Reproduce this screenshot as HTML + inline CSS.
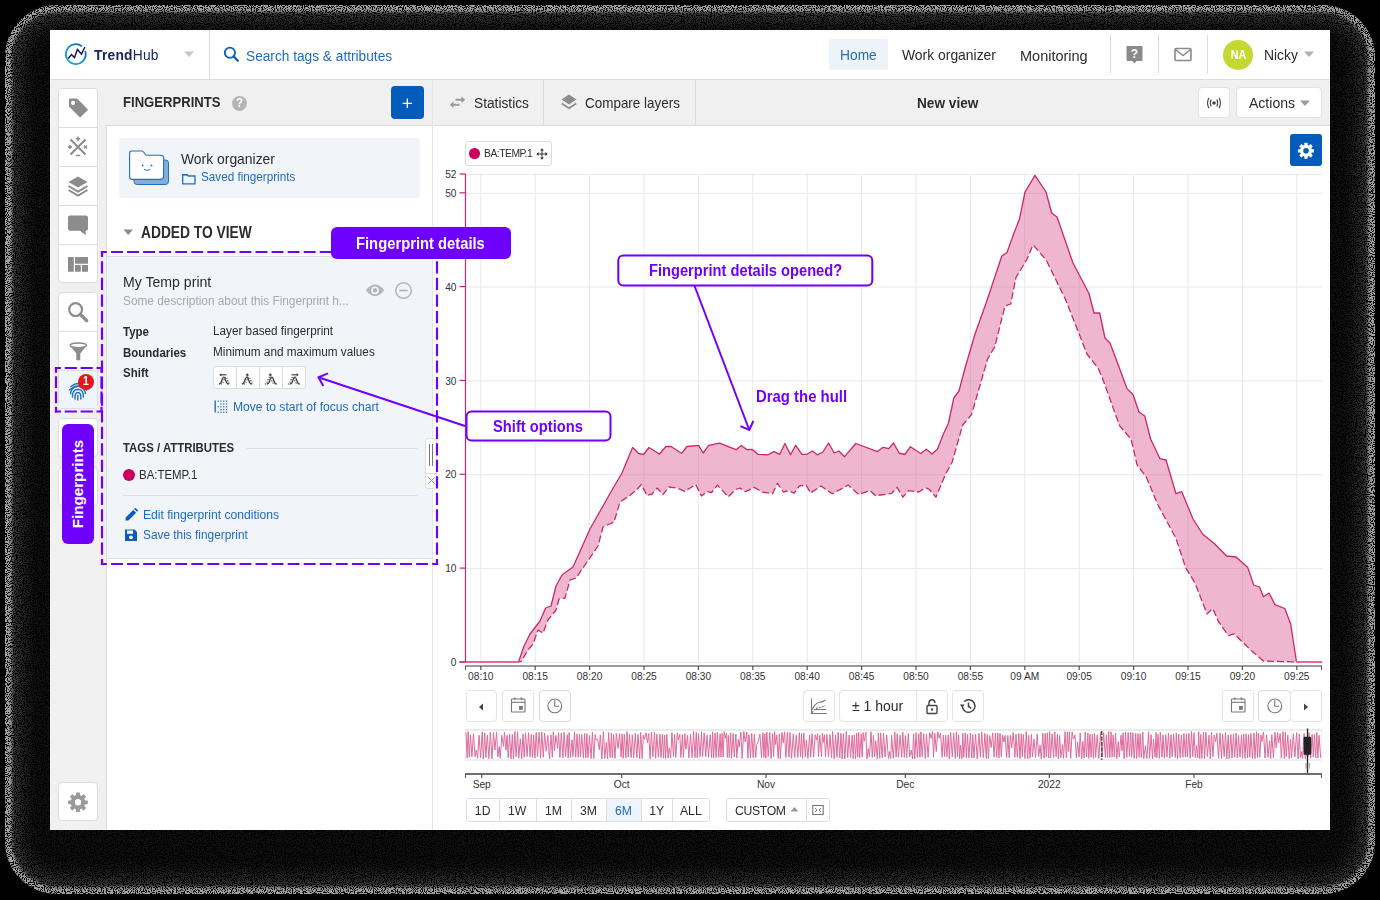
<!DOCTYPE html>
<html><head><meta charset="utf-8"><style>
*{box-sizing:border-box;margin:0;padding:0}
html,body{width:1380px;height:900px;overflow:hidden;background:#000}
body{font-family:"Liberation Sans",sans-serif;position:relative}
.abs{position:absolute}
svg{overflow:visible}
.t{position:absolute;white-space:nowrap;line-height:1;font-family:"Liberation Sans",sans-serif}
</style></head>
<body>
<div class="abs" style="left:5px;top:5px;width:1370px;height:889px;border-radius:52px;background:rgba(255,255,255,.06);box-shadow:inset 0 0 3px 7px rgba(255,255,255,.50), inset 0 0 26px 9px rgba(255,255,255,.30)"></div>
<svg class="abs" style="left:0;top:0" width="1380" height="900"><defs><filter id="spk" x="0" y="0" width="1380" height="900" filterUnits="userSpaceOnUse" color-interpolation-filters="sRGB"><feTurbulence type="fractalNoise" baseFrequency="0.9" numOctaves="1" seed="11"/><feColorMatrix type="matrix" values="0 0 0 0 0  0 0 0 0 0  0 0 0 0 0  14 0 0 0 -7"/></filter></defs><rect x="0" y="0" width="1380" height="900" fill="#000" filter="url(#spk)"/></svg>
<div class="abs" style="left:50px;top:30px;width:1280px;height:800px;background:#fff"></div>
<div class="abs" style="left:50px;top:79px;width:1280px;height:1px;background:#dddddd"></div>
<svg class="abs" style="left:64px;top:42px" width="24" height="24" viewBox="0 0 24 24"><defs><linearGradient id="lg" x1="0" y1="1" x2="1" y2="0"><stop offset="0" stop-color="#22b0e6"/><stop offset="1" stop-color="#0d5fbf"/></linearGradient></defs><path d="M21.27 9.09 A9.9 9.9 0 1 1 17.96 4.35" fill="none" stroke="url(#lg)" stroke-width="1.8"/><path d="M4.2 16.5 L7.5 12.6 L10.5 15.6 L13.4 7.5 L17.5 12.1 L20.9 5" fill="none" stroke="#1b1c5c" stroke-width="1.5" stroke-linejoin="miter"/></svg>
<div class="t" style="left:94.4px;top:48.31px;font-size:14.70px;font-weight:400;color:#1b2463;transform:scaleX(0.9390);transform-origin:0 0;letter-spacing:0.25px"><b>Trend</b>Hub</div>
<svg class="abs" style="left:184px;top:51px" width="11" height="7" viewBox="0 0 11 7"><path d="M0 0.5 L10 0.5 L5 6 Z" fill="#c8c8c8"/></svg>
<div class="abs" style="left:209px;top:30px;width:1px;height:49px;background:#dddddd"></div>
<svg class="abs" style="left:223px;top:46px" width="18" height="17" viewBox="0 0 18 17"><circle cx="6.9" cy="6.7" r="5.1" fill="none" stroke="#0f5fbf" stroke-width="1.9"/><path d="M10.6 10.4 L14.9 14.8" stroke="#0f5fbf" stroke-width="2.3" stroke-linecap="round"/></svg>
<div class="t" style="left:246.3px;top:48.90px;font-size:14.59px;font-weight:400;color:#1e6bc5;transform:scaleX(0.9390);transform-origin:0 0;">Search tags &amp; attributes</div>
<div class="abs" style="left:829px;top:39px;width:59px;height:31px;background:#eef3fa;border-radius:2px"></div>
<div class="t" style="left:840.3px;top:47.51px;font-size:14.70px;font-weight:400;color:#1e6bc5;transform:scaleX(0.9390);transform-origin:0 0;">Home</div>
<div class="t" style="left:901.7px;top:48.42px;font-size:14.80px;font-weight:400;color:#2b2b2b;transform:scaleX(0.9390);transform-origin:0 0;">Work organizer</div>
<div class="t" style="left:1019.9px;top:47.87px;font-size:15.44px;font-weight:400;color:#2b2b2b;transform:scaleX(0.9390);transform-origin:0 0;">Monitoring</div>
<div class="abs" style="left:1110px;top:35px;width:1px;height:39px;background:#dddddd"></div>
<div class="abs" style="left:1158px;top:35px;width:1px;height:39px;background:#dddddd"></div>
<div class="abs" style="left:1207px;top:35px;width:1px;height:39px;background:#dddddd"></div>
<svg class="abs" style="left:1126px;top:45px" width="18" height="20" viewBox="0 0 18 20"><path d="M1.5 1 H15.5 A1 1 0 0 1 16.5 2 V15 A1 1 0 0 1 15.5 16 H10.5 L8.5 18.5 L6.5 16 H1.5 A1 1 0 0 1 0.5 15 V2 A1 1 0 0 1 1.5 1 Z" fill="#8a8a8a"/><text x="8.5" y="13.2" font-family="Liberation Sans" font-weight="700" font-size="12" fill="#fff" text-anchor="middle">?</text></svg>
<svg class="abs" style="left:1174px;top:47px" width="18" height="15" viewBox="0 0 18 15"><rect x="1" y="1.5" width="16" height="12" rx="1" fill="none" stroke="#8a8a8a" stroke-width="1.6"/><path d="M1.5 2.5 L9 8.5 L16.5 2.5" fill="none" stroke="#8a8a8a" stroke-width="1.6"/></svg>
<div class="abs" style="left:1223px;top:39.5px;width:30px;height:30px;border-radius:50%;background:#c4d733"></div>
<div class="t" style="left:1226.5px;top:48.53px;font-size:12.20px;font-weight:700;color:#fff;transform:scaleX(0.8850);transform-origin:50% 0;width:23px;text-align:center">NA</div>
<div class="t" style="left:1263.6px;top:48.42px;font-size:14.80px;font-weight:400;color:#2b2b2b;transform:scaleX(0.9390);transform-origin:0 0;">Nicky</div>
<svg class="abs" style="left:1304px;top:51px" width="11" height="7" viewBox="0 0 11 7"><path d="M0 0.5 L10 0.5 L5 6 Z" fill="#b0b0b0"/></svg>
<div class="abs" style="left:50px;top:80px;width:382px;height:45px;background:#f0f0f0"></div>
<div class="abs" style="left:50px;top:125px;width:57px;height:705px;background:#f0f0f0"></div>
<div class="abs" style="left:106px;top:125px;width:1px;height:705px;background:#dddddd"></div>
<div class="abs" style="left:58px;top:88px;width:40px;height:195px;background:#fff;border:1px solid #dddddd;border-radius:4px"></div><div class="abs" style="left:58px;top:127px;width:40px;height:1px;background:#dddddd"></div><div class="abs" style="left:58px;top:166px;width:40px;height:1px;background:#dddddd"></div><div class="abs" style="left:58px;top:205px;width:40px;height:1px;background:#dddddd"></div><div class="abs" style="left:58px;top:244px;width:40px;height:1px;background:#dddddd"></div>
<div class="abs" style="left:58px;top:292px;width:40px;height:117px;background:#fff;border:1px solid #dddddd;border-radius:4px"></div><div class="abs" style="left:59px;top:371px;width:38px;height:37px;background:#eef5fb"></div><div class="abs" style="left:58px;top:331px;width:40px;height:1px;background:#dddddd"></div><div class="abs" style="left:58px;top:370px;width:40px;height:1px;background:#dddddd"></div>
<div class="abs" style="left:58px;top:418px;width:40px;height:39px;background:#fff;border:1px solid #dddddd;border-radius:4px"></div>
<div class="abs" style="left:58px;top:467px;width:40px;height:39px;background:#fff;border:1px solid #dddddd;border-radius:4px"></div>
<div class="abs" style="left:58px;top:782px;width:40px;height:39px;background:#fff;border:1px solid #dddddd;border-radius:4px"></div>
<svg class="abs" style="left:67px;top:97px" width="22" height="22" viewBox="0 0 22 22"><path d="M2 2.5 Q2 1.5 3 1.5 L10 1.5 L20.5 12 Q21 12.6 20.5 13.2 L13.7 20 Q13.1 20.5 12.5 20 L2 9.5 Z" fill="#8c8c8c"/><circle cx="6.1" cy="5.9" r="2.1" fill="#fff"/></svg>
<svg class="abs" style="left:67px;top:136px" width="22" height="22" viewBox="0 0 22 22"><path d="M3.5 3.5 L18.5 18.5 M18.5 3.5 L3.5 18.5" stroke="#8c8c8c" stroke-width="2"/><path d="M11 0.5 V5 M8.8 2.8 H13.2 M0.8 11 H5 M2.9 8.9 V13.1 M17 9.5 L20 12.5 M20 9.5 L17 12.5 M8.8 19.6 H13.2" stroke="#8c8c8c" stroke-width="1.5"/></svg>
<svg class="abs" style="left:67px;top:175px" width="22" height="22" viewBox="0 0 22 22"><path d="M11 1.5 L20.5 7 L11 12.5 L1.5 7 Z" fill="#8c8c8c"/><path d="M1.5 11 L11 16.5 L20.5 11 M1.5 15 L11 20.5 L20.5 15" fill="none" stroke="#8c8c8c" stroke-width="2"/></svg>
<svg class="abs" style="left:67px;top:214px" width="22" height="22" viewBox="0 0 22 22"><path d="M3 1.5 H19 Q21 1.5 21 3.5 V14.8 Q21 16.8 19 16.8 H18.6 L18.7 21.2 L13 16.8 H3 Q1 16.8 1 14.8 V3.5 Q1 1.5 3 1.5 Z" fill="#8c8c8c"/></svg>
<svg class="abs" style="left:67px;top:253px" width="22" height="22" viewBox="0 0 22 22"><path d="M1 4 H6.8 V18.8 H1 Z M8 4 H21 V10.7 H8 Z M8 12 H13.8 V18.8 H8 Z M15 12 H21 V18.8 H15 Z" fill="#8c8c8c"/></svg>
<svg class="abs" style="left:67px;top:301px" width="22" height="22" viewBox="0 0 22 22"><circle cx="8.6" cy="8.6" r="6.4" fill="none" stroke="#8c8c8c" stroke-width="2.2"/><path d="M13.3 13.3 L19.6 19.6" stroke="#8c8c8c" stroke-width="3.4" stroke-linecap="round"/></svg>
<svg class="abs" style="left:67px;top:340px" width="22" height="22" viewBox="0 0 22 22"><ellipse cx="11.3" cy="5.3" rx="8.1" ry="2.4" fill="none" stroke="#8c8c8c" stroke-width="1.5"/><path d="M3.2 5.8 L9.3 13.5 V20.3 H13.3 V13.5 L19.4 5.8 Q16 8.4 11.3 8.2 Q6.6 8.4 3.2 5.8 Z" fill="#8c8c8c"/></svg>
<svg class="abs" style="left:67px;top:379px" width="22" height="22" viewBox="0 0 22 22"><g fill="none" stroke="#1f6fc2" stroke-width="1.4" stroke-linecap="round"><path d="M4 7.5 Q11 1.5 18 7.5"/><path d="M2.5 11 Q11 3.5 19.5 11"/><path d="M3.5 14.5 Q5 7 11 7 Q17 7 18.5 14.5"/><path d="M5.5 18 Q5 10.5 11 10.3 Q16.8 10.5 16.3 18"/><path d="M8 20 Q7.5 13.5 11 13.5 Q14.3 13.5 13.8 20"/><path d="M10.8 16.5 L10.8 21"/></g></svg>
<div class="abs" style="left:78px;top:374px;width:16px;height:16px;border-radius:50%;background:#e3161b"></div>
<div class="t" style="left:78px;top:376.11px;font-size:11.86px;font-weight:700;color:#fff;transform:scaleX(0.8850);transform-origin:50% 0;width:16px;text-align:center">1</div>
<div class="abs" style="left:62px;top:424px;width:32px;height:120px;background:#6f00ff;border-radius:6px"></div>
<div class="t" style="left:78px;top:484px;font-size:15.2px;font-weight:700;color:#fff;transform:translate(-50%,-50%) rotate(-90deg);transform-origin:50% 50%;left:78px">Fingerprints</div>
<svg class="abs" style="left:67px;top:791px" width="22" height="22" viewBox="0 0 22 22"><circle cx="11" cy="11.3" r="7.3" fill="#999"/><rect x="9.10" y="1.50" width="3.8" height="4.00" rx="0.5" fill="#999" transform="rotate(0.0 11 11.3)"/><rect x="9.10" y="1.50" width="3.8" height="4.00" rx="0.5" fill="#999" transform="rotate(45.0 11 11.3)"/><rect x="9.10" y="1.50" width="3.8" height="4.00" rx="0.5" fill="#999" transform="rotate(90.0 11 11.3)"/><rect x="9.10" y="1.50" width="3.8" height="4.00" rx="0.5" fill="#999" transform="rotate(135.0 11 11.3)"/><rect x="9.10" y="1.50" width="3.8" height="4.00" rx="0.5" fill="#999" transform="rotate(180.0 11 11.3)"/><rect x="9.10" y="1.50" width="3.8" height="4.00" rx="0.5" fill="#999" transform="rotate(225.0 11 11.3)"/><rect x="9.10" y="1.50" width="3.8" height="4.00" rx="0.5" fill="#999" transform="rotate(270.0 11 11.3)"/><rect x="9.10" y="1.50" width="3.8" height="4.00" rx="0.5" fill="#999" transform="rotate(315.0 11 11.3)"/><circle cx="11" cy="11.3" r="3.2" fill="#fff"/></svg>
<div class="abs" style="left:107px;top:125px;width:325px;height:705px;background:#fff;border-top:1px solid #dddddd"></div>
<div class="abs" style="left:432px;top:80px;width:1px;height:750px;background:#e4e4e4"></div>
<div class="t" style="left:122.7px;top:95.22px;font-size:14.80px;font-weight:700;color:#2b2b2b;transform:scaleX(0.8850);transform-origin:0 0;">FINGERPRINTS</div>
<div class="abs" style="left:232px;top:95.5px;width:15px;height:15px;border-radius:50%;background:#b4b4b4"></div>
<div class="t" style="left:232px;top:96.25px;font-size:12.99px;font-weight:700;color:#fff;transform:scaleX(0.8850);transform-origin:50% 0;width:15px;text-align:center">?</div>
<div class="abs" style="left:391px;top:86px;width:33px;height:33px;background:#035cbb;border-radius:4px"></div>
<svg class="abs" style="left:399px;top:95px" width="16" height="16" viewBox="0 0 16 16"><path d="M8.3 3.6 V12.9 M3.6 8.3 H12.9" stroke="#fff" stroke-width="1.3"/></svg>
<div class="abs" style="left:119px;top:138px;width:301px;height:60px;background:#f1f4f9;border-radius:4px"></div>
<svg class="abs" style="left:126px;top:148px" width="46" height="40" viewBox="0 0 46 40"><rect x="8" y="12" width="34.5" height="24.5" rx="3" fill="#7fb0dd" stroke="#1f6fc2" stroke-width="1"/><path d="M3.6 5.5 Q3.6 3 6 3 H16.5 L20.3 7.3 H34.6 Q37.6 7.3 37.6 10 V28.5 Q37.6 31.4 34.6 31.4 H6 Q3.6 31.4 3.6 28.5 Z" fill="#fff" stroke="#1f6fc2" stroke-width="1.1"/><circle cx="16.7" cy="17.4" r="0.9" fill="#1f6fc2"/><circle cx="25.5" cy="17.4" r="0.9" fill="#1f6fc2"/><path d="M18 21.4 Q21 23.4 24.3 21.4" fill="none" stroke="#1f6fc2" stroke-width="1"/></svg>
<div class="t" style="left:181.3px;top:151.92px;font-size:14.80px;font-weight:400;color:#2b2b2b;transform:scaleX(0.9390);transform-origin:0 0;">Work organizer</div>
<svg class="abs" style="left:181px;top:173px" width="16" height="12" viewBox="0 0 16 12"><path d="M1.7 1.7 H6 L7.4 3 H14 V10.8 H1.7 Z" fill="none" stroke="#1f6fc2" stroke-width="1.3"/><path d="M1.7 1.4 H6 L7.2 2.6 H1.7Z" fill="#1f6fc2"/></svg>
<div class="t" style="left:200.5px;top:171.41px;font-size:12.46px;font-weight:400;color:#1e6bc5;transform:scaleX(0.9390);transform-origin:0 0;">Saved fingerprints</div>
<svg class="abs" style="left:123px;top:229px" width="11" height="7" viewBox="0 0 11 7"><path d="M0.5 0.5 L10 0.5 L5.25 6 Z" fill="#8c8c8c"/></svg>
<div class="t" style="left:141.2px;top:225.15px;font-size:15.59px;font-weight:700;color:#2b2b2b;transform:scaleX(0.8850);transform-origin:0 0;">ADDED TO VIEW</div>
<div class="abs" style="left:107px;top:256px;width:325px;height:303px;background:#f1f4f9;border-top:1px solid #dddddd;border-bottom:1px solid #dddddd"></div>
<div class="t" style="left:123.4px;top:273.84px;font-size:15.02px;font-weight:400;color:#2b2b2b;transform:scaleX(0.9390);transform-origin:0 0;">My Temp print</div>
<div class="t" style="left:123.4px;top:294.77px;font-size:12.62px;font-weight:400;color:#a8a8a8;transform:scaleX(0.9390);transform-origin:0 0;">Some description about this Fingerprint h...</div>
<svg class="abs" style="left:364px;top:282px" width="22" height="16" viewBox="0 0 22 16"><path d="M1.8 8.3 Q11 -3.2 20.2 8.3 Q11 19.8 1.8 8.3 Z" fill="#b2b6bb"/><circle cx="11" cy="8.3" r="3.9" fill="#f1f4f9"/><circle cx="11" cy="8.3" r="2.2" fill="#b2b6bb"/></svg>
<svg class="abs" style="left:394px;top:281px" width="19" height="19" viewBox="0 0 19 19"><circle cx="9.5" cy="9.5" r="7.8" fill="none" stroke="#b2b6bb" stroke-width="1.5"/><path d="M5.3 9.5 H13.7" stroke="#b2b6bb" stroke-width="1.7"/></svg>
<div class="t" style="left:123.4px;top:324.55px;font-size:12.99px;font-weight:700;color:#2b2b2b;transform:scaleX(0.8850);transform-origin:0 0;">Type</div>
<div class="t" style="left:213.4px;top:324.96px;font-size:12.51px;font-weight:400;color:#2b2b2b;transform:scaleX(0.9390);transform-origin:0 0;">Layer based fingerprint</div>
<div class="t" style="left:123.4px;top:345.55px;font-size:12.99px;font-weight:700;color:#2b2b2b;transform:scaleX(0.8850);transform-origin:0 0;">Boundaries</div>
<div class="t" style="left:213.4px;top:345.96px;font-size:12.51px;font-weight:400;color:#2b2b2b;transform:scaleX(0.9390);transform-origin:0 0;">Minimum and maximum values</div>
<div class="t" style="left:123.4px;top:365.85px;font-size:12.99px;font-weight:700;color:#2b2b2b;transform:scaleX(0.8850);transform-origin:0 0;">Shift</div>
<div class="abs" style="left:213px;top:366px;width:93px;height:23px;background:#fff;border:1px solid #dddddd;border-radius:3px"></div>
<div class="abs" style="left:236px;top:366px;width:1px;height:23px;background:#dddddd"></div>
<div class="abs" style="left:259px;top:366px;width:1px;height:23px;background:#dddddd"></div>
<div class="abs" style="left:282px;top:366px;width:1px;height:23px;background:#dddddd"></div>
<svg class="abs" style="left:218px;top:372.5px" width="13" height="12" viewBox="0 0 13 12"><g fill="none" stroke="#444"><path d="M0.8 11 Q2.8 11 3.8 7.5 Q4.8 4.2 5.8 4.2 Q6.8 4.2 7.8 7.5 Q8.8 11 10.8 11" stroke-width="1.3"/><path d="M2.8 11 Q4.8 11 5.8 7.5 Q6.8 4.2 7.8 4.2 Q8.8 4.2 9.8 7.5 Q10.8 11 12.8 11" stroke-width="1.1" stroke-dasharray="1.2 1.3"/><path d="M2.5 1.8 H8.5" stroke-width="1.2"/><path d="M1.2 1.8 L3.4 0.2 V3.4 Z" fill="#444" stroke="none"/></g></svg>
<svg class="abs" style="left:241px;top:372.5px" width="13" height="12" viewBox="0 0 13 12"><g fill="none" stroke="#444"><path d="M0.8 11 Q2.8 11 3.8 7.5 Q4.8 4.2 5.8 4.2 Q6.8 4.2 7.8 7.5 Q8.8 11 10.8 11" stroke-width="1.3"/><path d="M2.8 11 Q4.8 11 5.8 7.5 Q6.8 4.2 7.8 4.2 Q8.8 4.2 9.8 7.5 Q10.8 11 12.8 11" stroke-width="1.1" stroke-dasharray="1.2 1.3"/><path d="M6.3 0.5 V3.6 M4.9 1.9 H7.7" stroke-width="1.2"/></g></svg>
<svg class="abs" style="left:264px;top:372.5px" width="13" height="12" viewBox="0 0 13 12"><g fill="none" stroke="#444"><path d="M2.8 11 Q4.8 11 5.8 7.5 Q6.8 4.2 7.8 4.2 Q8.8 4.2 9.8 7.5 Q10.8 11 12.8 11" stroke-width="1.3"/><path d="M0.8 11 Q2.8 11 3.8 7.5 Q4.8 4.2 5.8 4.2 Q6.8 4.2 7.8 7.5 Q8.8 11 10.8 11" stroke-width="1.1" stroke-dasharray="1.2 1.3"/><path d="M6.3 0.5 V3.6 M4.9 1.9 H7.7" stroke-width="1.2"/></g></svg>
<svg class="abs" style="left:287px;top:372.5px" width="13" height="12" viewBox="0 0 13 12"><g fill="none" stroke="#444"><path d="M2.8 11 Q4.8 11 5.8 7.5 Q6.8 4.2 7.8 4.2 Q8.8 4.2 9.8 7.5 Q10.8 11 12.8 11" stroke-width="1.3"/><path d="M0.8 11 Q2.8 11 3.8 7.5 Q4.8 4.2 5.8 4.2 Q6.8 4.2 7.8 7.5 Q8.8 11 10.8 11" stroke-width="1.1" stroke-dasharray="1.2 1.3"/><path d="M4.5 1.8 H10.5" stroke-width="1.2"/><path d="M11.8 1.8 L9.6 0.2 V3.4 Z" fill="#444" stroke="none"/></g></svg>
<svg class="abs" style="left:214px;top:400px" width="14" height="14" viewBox="0 0 14 14"><g fill="#2a6fc0"><rect x="0.5" y="0.5" width="1.4" height="12"/><rect x="3.5" y="0.5" width="1.3" height="1.3"/><rect x="3.5" y="6.1" width="1.3" height="1.3"/><rect x="3.5" y="11.7" width="1.3" height="1.3"/><rect x="6.3" y="0.5" width="1.3" height="1.3"/><rect x="6.3" y="3.3" width="1.3" height="1.3"/><rect x="6.3" y="6.1" width="1.3" height="1.3"/><rect x="6.3" y="8.9" width="1.3" height="1.3"/><rect x="6.3" y="11.7" width="1.3" height="1.3"/><rect x="9.1" y="0.5" width="1.3" height="1.3"/><rect x="9.1" y="3.3" width="1.3" height="1.3"/><rect x="9.1" y="6.1" width="1.3" height="1.3"/><rect x="9.1" y="8.9" width="1.3" height="1.3"/><rect x="9.1" y="11.7" width="1.3" height="1.3"/><rect x="11.9" y="0.5" width="1.3" height="1.3"/><rect x="11.9" y="3.3" width="1.3" height="1.3"/><rect x="11.9" y="6.1" width="1.3" height="1.3"/><rect x="11.9" y="8.9" width="1.3" height="1.3"/><rect x="11.9" y="11.7" width="1.3" height="1.3"/></g></svg>
<div class="t" style="left:233.2px;top:401.05px;font-size:12.89px;font-weight:400;color:#1e6bc5;transform:scaleX(0.9390);transform-origin:0 0;">Move to start of focus chart</div>
<div class="t" style="left:123.4px;top:441.65px;font-size:12.88px;font-weight:700;color:#2b2b2b;transform:scaleX(0.8850);transform-origin:0 0;">TAGS / ATTRIBUTES</div>
<div class="abs" style="left:247px;top:448px;width:170px;height:1px;background:#dadde2"></div>
<div class="abs" style="left:123px;top:468.5px;width:12px;height:12px;border-radius:50%;background:#c9005e"></div>
<div class="t" style="left:139.4px;top:468.53px;font-size:12.19px;font-weight:400;color:#2b2b2b;transform:scaleX(0.9390);transform-origin:0 0;">BA:TEMP.1</div>
<div class="abs" style="left:123px;top:495px;width:294px;height:1px;background:#dadde2"></div>
<svg class="abs" style="left:124px;top:508px" width="14" height="14" viewBox="0 0 14 14"><path d="M1.5 12.5 L1.6 9.6 L9.3 1.9 L12.1 4.7 L4.4 12.4 Z M10.2 1 L11.4 -0.2 L14.2 2.6 L13 3.8Z" fill="#0a5cc0"/></svg>
<div class="t" style="left:143.2px;top:508.52px;font-size:12.92px;font-weight:400;color:#1e6bc5;transform:scaleX(0.9390);transform-origin:0 0;">Edit fingerprint conditions</div>
<svg class="abs" style="left:124px;top:528px" width="14" height="14" viewBox="0 0 14 14"><path d="M1 1.5 H10.5 L13 4 V12.5 Q13 13 12.5 13 H1.5 Q1 13 1 12.5 Z" fill="#0a5cc0"/><rect x="3" y="2.5" width="6" height="3.3" fill="#fff"/><circle cx="7" cy="9.3" r="1.9" fill="#fff"/></svg>
<div class="t" style="left:143.2px;top:529.06px;font-size:12.63px;font-weight:400;color:#1e6bc5;transform:scaleX(0.9390);transform-origin:0 0;">Save this fingerprint</div>
<div class="abs" style="left:425px;top:438px;width:12px;height:51px;background:#fff;border:1px solid #dddddd;border-radius:3px"></div>
<div class="abs" style="left:425px;top:473px;width:12px;height:1px;background:#dddddd"></div>
<div class="abs" style="left:429px;top:444px;width:1px;height:22px;background:#777"></div>
<div class="abs" style="left:432px;top:444px;width:1px;height:22px;background:#777"></div>
<svg class="abs" style="left:427px;top:476px" width="9" height="9" viewBox="0 0 9 9"><path d="M1.5 1.5 L7.5 7.5 M7.5 1.5 L1.5 7.5" stroke="#999" stroke-width="1"/></svg>
<div class="abs" style="left:433px;top:80px;width:897px;height:46px;background:#f0f0f0;border-bottom:1px solid #dddddd"></div>
<div class="abs" style="left:543px;top:80px;width:1px;height:45px;background:#dcdcdc"></div>
<div class="abs" style="left:695px;top:80px;width:1px;height:45px;background:#dcdcdc"></div>
<svg class="abs" style="left:449px;top:95px" width="18" height="14" viewBox="0 0 18 14"><g fill="#999" stroke="none"><path d="M6.5 3.8 H13 V5.8 H6.5 Z M12.5 1.6 L16.2 4.8 L12.5 8 Z"/><path d="M10.5 8.8 H4 V10.8 H10.5 Z M4.5 6.6 L0.8 9.8 L4.5 13 Z"/></g></svg>
<div class="t" style="left:473.6px;top:95.75px;font-size:14.64px;font-weight:400;color:#2b2b2b;transform:scaleX(0.9390);transform-origin:0 0;">Statistics</div>
<svg class="abs" style="left:560px;top:93px" width="18" height="18" viewBox="0 0 18 18"><path d="M9 1.5 L16.5 6.5 L9 11.5 L1.5 6.5 Z" fill="#8c8c8c"/><path d="M1.8 10.5 L9 15.3 L16.2 10.5" fill="none" stroke="#8c8c8c" stroke-width="1.7"/></svg>
<div class="t" style="left:585.2px;top:96.02px;font-size:14.33px;font-weight:400;color:#2b2b2b;transform:scaleX(0.9390);transform-origin:0 0;">Compare layers</div>
<div class="t" style="left:916.6px;top:94.90px;font-size:15.41px;font-weight:700;color:#2b2b2b;transform:scaleX(0.8850);transform-origin:0 0;">New view</div>
<div class="abs" style="left:1198px;top:87px;width:32px;height:31px;background:#fff;border:1px solid #e2e2e2;border-radius:4px"></div>
<svg class="abs" style="left:1205px;top:95px" width="18" height="16" viewBox="0 0 18 16"><circle cx="9" cy="8" r="1.8" fill="#444"/><g fill="none" stroke="#444" stroke-width="1.1"><path d="M6.2 4.6 Q4.4 8 6.2 11.4 M11.8 4.6 Q13.6 8 11.8 11.4"/><path d="M4 2.8 Q1 8 4 13.2 M14 2.8 Q17 8 14 13.2"/></g></svg>
<div class="abs" style="left:1236px;top:87px;width:86px;height:31px;background:#fff;border:1px solid #e2e2e2;border-radius:4px"></div>
<div class="t" style="left:1249px;top:96.30px;font-size:14.94px;font-weight:400;color:#2b2b2b;transform:scaleX(0.9390);transform-origin:0 0;">Actions</div>
<svg class="abs" style="left:1300px;top:100px" width="11" height="7" viewBox="0 0 11 7"><path d="M0 0.5 L10 0.5 L5 6 Z" fill="#9a9a9a"/></svg>
<div class="abs" style="left:1290px;top:134px;width:32px;height:32px;background:#035cbb;border-radius:3px"></div>
<svg class="abs" style="left:1295px;top:140px" width="22" height="22" viewBox="0 0 22 22"><circle cx="11" cy="10.8" r="6.0" fill="#fff"/><rect x="9.35" y="2.80" width="3.3" height="3.50" rx="0.5" fill="#fff" transform="rotate(0.0 11 10.8)"/><rect x="9.35" y="2.80" width="3.3" height="3.50" rx="0.5" fill="#fff" transform="rotate(45.0 11 10.8)"/><rect x="9.35" y="2.80" width="3.3" height="3.50" rx="0.5" fill="#fff" transform="rotate(90.0 11 10.8)"/><rect x="9.35" y="2.80" width="3.3" height="3.50" rx="0.5" fill="#fff" transform="rotate(135.0 11 10.8)"/><rect x="9.35" y="2.80" width="3.3" height="3.50" rx="0.5" fill="#fff" transform="rotate(180.0 11 10.8)"/><rect x="9.35" y="2.80" width="3.3" height="3.50" rx="0.5" fill="#fff" transform="rotate(225.0 11 10.8)"/><rect x="9.35" y="2.80" width="3.3" height="3.50" rx="0.5" fill="#fff" transform="rotate(270.0 11 10.8)"/><rect x="9.35" y="2.80" width="3.3" height="3.50" rx="0.5" fill="#fff" transform="rotate(315.0 11 10.8)"/><circle cx="11" cy="10.8" r="2.8" fill="#035cbb"/></svg>
<div class="abs" style="left:465px;top:141px;width:87px;height:25px;background:#fff;border:1px solid #dcdcdc;border-radius:3px"></div>
<div class="abs" style="left:469.3px;top:148px;width:10.5px;height:10.5px;border-radius:50%;background:#c9005e"></div>
<div class="t" style="left:483.8px;top:148.18px;font-size:10.97px;font-weight:400;color:#2b2b2b;transform:scaleX(0.9390);transform-origin:0 0;letter-spacing:-0.5px">BA:TEMP.1</div>
<svg class="abs" style="left:536.3px;top:147.6px" width="12" height="12" viewBox="0 0 12 12"><path d="M6 2 V10 M2 6 H10" stroke="#333" stroke-width="1"/><path d="M6 0.3 L7.9 2.6 H4.1Z M6 11.7 L7.9 9.4 H4.1Z M0.3 6 L2.6 4.1 V7.9Z M11.7 6 L9.4 4.1 V7.9Z" fill="#333"/></svg>
<svg class="abs" style="left:0;top:0" width="1380" height="900" viewBox="0 0 1380 900" font-family="Liberation Sans"><path d="M465 174.5 H1322" stroke="#e9e9e9" stroke-width="1"/><path d="M465 193.3 H1322" stroke="#e9e9e9" stroke-width="1"/><path d="M465 287.1 H1322" stroke="#e9e9e9" stroke-width="1"/><path d="M465 380.9 H1322" stroke="#e9e9e9" stroke-width="1"/><path d="M465 474.8 H1322" stroke="#e9e9e9" stroke-width="1"/><path d="M465 568.6 H1322" stroke="#e9e9e9" stroke-width="1"/><path d="M465 662.5 H1322" stroke="#e9e9e9" stroke-width="1"/><path d="M480.8 174 V662" stroke="#e9e9e9" stroke-width="1"/><path d="M535.2 174 V662" stroke="#e9e9e9" stroke-width="1"/><path d="M589.6 174 V662" stroke="#e9e9e9" stroke-width="1"/><path d="M644.0 174 V662" stroke="#e9e9e9" stroke-width="1"/><path d="M698.4 174 V662" stroke="#e9e9e9" stroke-width="1"/><path d="M752.8 174 V662" stroke="#e9e9e9" stroke-width="1"/><path d="M807.2 174 V662" stroke="#e9e9e9" stroke-width="1"/><path d="M861.6 174 V662" stroke="#e9e9e9" stroke-width="1"/><path d="M916.0 174 V662" stroke="#e9e9e9" stroke-width="1"/><path d="M970.4 174 V662" stroke="#e9e9e9" stroke-width="1"/><path d="M1024.8 174 V662" stroke="#e9e9e9" stroke-width="1"/><path d="M1079.2 174 V662" stroke="#e9e9e9" stroke-width="1"/><path d="M1133.6 174 V662" stroke="#e9e9e9" stroke-width="1"/><path d="M1188.0 174 V662" stroke="#e9e9e9" stroke-width="1"/><path d="M1242.4 174 V662" stroke="#e9e9e9" stroke-width="1"/><path d="M1296.8 174 V662" stroke="#e9e9e9" stroke-width="1"/><polygon points="465.0,662.0 518.5,662.0 524.0,646.0 530.0,634.0 540.0,621.0 545.6,608.0 551.0,606.0 556.0,586.0 562.0,575.0 573.0,567.0 590.0,529.0 612.0,490.0 622.0,473.0 632.6,447.5 638.4,453.3 643.5,454.5 649.0,447.5 659.4,454.0 666.0,446.5 671.0,446.5 681.6,453.3 687.0,446.5 698.6,445.4 703.2,453.0 708.7,445.4 719.6,443.2 736.0,449.7 741.3,445.4 747.0,449.7 752.0,449.3 758.0,454.3 768.0,454.8 774.0,451.6 779.7,454.3 785.0,443.5 790.5,454.8 795.6,445.4 802.0,454.3 806.9,454.3 812.5,451.0 817.2,454.8 822.9,452.0 828.5,443.0 834.2,453.0 838.9,451.0 844.5,456.7 855.8,443.5 877.5,451.6 883.1,447.3 888.8,448.6 893.5,443.0 899.1,453.0 904.8,454.5 910.4,446.7 920.8,453.5 926.4,449.2 932.0,454.0 937.4,449.2 943.4,434.0 948.5,423.0 953.8,398.0 959.0,391.0 964.5,370.0 975.0,334.0 985.8,304.0 1001.8,256.0 1007.0,252.5 1014.0,233.0 1019.6,218.7 1025.0,192.0 1035.0,175.3 1046.0,192.0 1051.7,213.0 1057.0,217.0 1073.0,263.0 1089.0,293.5 1094.0,313.0 1099.7,313.0 1105.0,338.0 1110.0,343.0 1117.5,363.0 1127.0,388.6 1133.0,394.5 1139.0,412.0 1144.7,416.0 1150.6,439.0 1160.0,458.7 1166.0,460.0 1176.0,493.7 1181.7,491.7 1193.0,519.0 1203.0,534.6 1214.8,544.0 1226.5,556.0 1236.0,557.0 1247.8,567.6 1253.7,585.0 1259.5,587.0 1263.4,596.8 1269.0,593.0 1275.0,604.6 1284.8,608.5 1290.7,624.0 1296.5,662.0 1322.0,662.0 1322.0,662.0 1296.0,662.0 1263.4,661.0 1251.8,651.0 1234.0,633.8 1228.4,635.7 1218.7,622.0 1212.8,608.5 1207.0,614.0 1195.0,583.0 1185.6,567.6 1176.0,538.4 1158.0,505.0 1146.7,478.0 1137.0,464.5 1131.0,439.0 1119.5,425.6 1102.0,377.0 1098.0,368.0 1087.0,354.0 1066.0,300.6 1046.0,259.6 1042.8,256.0 1033.0,244.7 1026.8,259.6 1016.0,277.4 1010.7,304.0 1005.0,306.0 994.7,346.8 987.6,359.0 971.6,414.4 962.7,425.0 952.0,462.5 945.3,474.6 935.9,497.2 929.3,489.3 925.5,487.8 918.9,492.0 908.5,490.6 902.9,497.2 897.2,487.4 891.6,493.4 875.6,495.7 870.0,490.6 858.6,494.4 848.3,485.0 832.3,493.8 821.0,486.0 810.6,493.0 806.0,485.0 799.3,486.0 794.2,493.2 788.4,490.6 783.3,492.0 777.5,483.3 772.5,493.6 762.3,492.2 754.3,487.4 745.7,491.7 739.9,488.0 735.5,489.6 728.3,496.8 717.4,485.2 711.6,492.5 707.2,491.7 701.4,496.0 695.6,484.5 684.8,491.3 676.8,488.0 668.8,487.0 663.0,494.6 657.2,488.0 652.0,494.0 647.0,495.4 641.3,484.5 637.0,489.6 629.0,496.0 620.0,502.0 614.0,522.0 603.0,527.0 598.0,546.0 576.0,578.0 570.0,580.0 565.0,598.0 559.0,599.0 556.0,610.0 548.0,620.0 543.0,633.0 538.0,630.0 533.0,644.0 528.0,650.0 521.0,661.6 465.0,662.0" fill="rgb(209,49,118)" fill-opacity="0.35"/><polyline points="465.0,662.0 518.5,662.0 524.0,646.0 530.0,634.0 540.0,621.0 545.6,608.0 551.0,606.0 556.0,586.0 562.0,575.0 573.0,567.0 590.0,529.0 612.0,490.0 622.0,473.0 632.6,447.5 638.4,453.3 643.5,454.5 649.0,447.5 659.4,454.0 666.0,446.5 671.0,446.5 681.6,453.3 687.0,446.5 698.6,445.4 703.2,453.0 708.7,445.4 719.6,443.2 736.0,449.7 741.3,445.4 747.0,449.7 752.0,449.3 758.0,454.3 768.0,454.8 774.0,451.6 779.7,454.3 785.0,443.5 790.5,454.8 795.6,445.4 802.0,454.3 806.9,454.3 812.5,451.0 817.2,454.8 822.9,452.0 828.5,443.0 834.2,453.0 838.9,451.0 844.5,456.7 855.8,443.5 877.5,451.6 883.1,447.3 888.8,448.6 893.5,443.0 899.1,453.0 904.8,454.5 910.4,446.7 920.8,453.5 926.4,449.2 932.0,454.0 937.4,449.2 943.4,434.0 948.5,423.0 953.8,398.0 959.0,391.0 964.5,370.0 975.0,334.0 985.8,304.0 1001.8,256.0 1007.0,252.5 1014.0,233.0 1019.6,218.7 1025.0,192.0 1035.0,175.3 1046.0,192.0 1051.7,213.0 1057.0,217.0 1073.0,263.0 1089.0,293.5 1094.0,313.0 1099.7,313.0 1105.0,338.0 1110.0,343.0 1117.5,363.0 1127.0,388.6 1133.0,394.5 1139.0,412.0 1144.7,416.0 1150.6,439.0 1160.0,458.7 1166.0,460.0 1176.0,493.7 1181.7,491.7 1193.0,519.0 1203.0,534.6 1214.8,544.0 1226.5,556.0 1236.0,557.0 1247.8,567.6 1253.7,585.0 1259.5,587.0 1263.4,596.8 1269.0,593.0 1275.0,604.6 1284.8,608.5 1290.7,624.0 1296.5,662.0 1322.0,662.0" fill="none" stroke="#c9286f" stroke-width="1.3" stroke-linejoin="round"/><polyline points="465.0,662.0 521.0,661.6 528.0,650.0 533.0,644.0 538.0,630.0 543.0,633.0 548.0,620.0 556.0,610.0 559.0,599.0 565.0,598.0 570.0,580.0 576.0,578.0 598.0,546.0 603.0,527.0 614.0,522.0 620.0,502.0 629.0,496.0 637.0,489.6 641.3,484.5 647.0,495.4 652.0,494.0 657.2,488.0 663.0,494.6 668.8,487.0 676.8,488.0 684.8,491.3 695.6,484.5 701.4,496.0 707.2,491.7 711.6,492.5 717.4,485.2 728.3,496.8 735.5,489.6 739.9,488.0 745.7,491.7 754.3,487.4 762.3,492.2 772.5,493.6 777.5,483.3 783.3,492.0 788.4,490.6 794.2,493.2 799.3,486.0 806.0,485.0 810.6,493.0 821.0,486.0 832.3,493.8 848.3,485.0 858.6,494.4 870.0,490.6 875.6,495.7 891.6,493.4 897.2,487.4 902.9,497.2 908.5,490.6 918.9,492.0 925.5,487.8 929.3,489.3 935.9,497.2 945.3,474.6 952.0,462.5 962.7,425.0 971.6,414.4 987.6,359.0 994.7,346.8 1005.0,306.0 1010.7,304.0 1016.0,277.4 1026.8,259.6 1033.0,244.7 1042.8,256.0 1046.0,259.6 1066.0,300.6 1087.0,354.0 1098.0,368.0 1102.0,377.0 1119.5,425.6 1131.0,439.0 1137.0,464.5 1146.7,478.0 1158.0,505.0 1176.0,538.4 1185.6,567.6 1195.0,583.0 1207.0,614.0 1212.8,608.5 1218.7,622.0 1228.4,635.7 1234.0,633.8 1251.8,651.0 1263.4,661.0 1296.0,662.0 1322.0,662.0" fill="none" stroke="#c9286f" stroke-width="1.3" stroke-dasharray="7 3" stroke-linejoin="round"/><path d="M459.5 662 H519" stroke="#e06aa0" stroke-width="2"/><path d="M1296 662 H1322" stroke="#e06aa0" stroke-width="2"/><path d="M465.5 174 V662" stroke="#c9286f" stroke-width="1.2"/><path d="M459.5 174.0 H465.5" stroke="#c9286f" stroke-width="1.2"/><text x="456.5" y="178.1" font-size="10.2" text-anchor="end" fill="#333">52</text><path d="M459.5 192.8 H465.5" stroke="#c9286f" stroke-width="1.2"/><text x="456.5" y="196.9" font-size="10.2" text-anchor="end" fill="#333">50</text><path d="M459.5 286.6 H465.5" stroke="#c9286f" stroke-width="1.2"/><text x="456.5" y="290.7" font-size="10.2" text-anchor="end" fill="#333">40</text><path d="M459.5 380.4 H465.5" stroke="#c9286f" stroke-width="1.2"/><text x="456.5" y="384.5" font-size="10.2" text-anchor="end" fill="#333">30</text><path d="M459.5 474.3 H465.5" stroke="#c9286f" stroke-width="1.2"/><text x="456.5" y="478.4" font-size="10.2" text-anchor="end" fill="#333">20</text><path d="M459.5 568.1 H465.5" stroke="#c9286f" stroke-width="1.2"/><text x="456.5" y="572.2" font-size="10.2" text-anchor="end" fill="#333">10</text><path d="M459.5 662.0 H465.5" stroke="#c9286f" stroke-width="1.2"/><text x="456.5" y="666.1" font-size="10.2" text-anchor="end" fill="#333">0</text><path d="M465 666 H1322" stroke="#7a7a7a" stroke-width="1.6"/><path d="M465.5 666 V670 M1321.5 666 V670" stroke="#555" stroke-width="1"/><path d="M480.8 666 V670" stroke="#555" stroke-width="1.2"/><text x="480.8" y="680" font-size="10.2" text-anchor="middle" fill="#333">08:10</text><path d="M535.2 666 V670" stroke="#555" stroke-width="1.2"/><text x="535.2" y="680" font-size="10.2" text-anchor="middle" fill="#333">08:15</text><path d="M589.6 666 V670" stroke="#555" stroke-width="1.2"/><text x="589.6" y="680" font-size="10.2" text-anchor="middle" fill="#333">08:20</text><path d="M644.0 666 V670" stroke="#555" stroke-width="1.2"/><text x="644.0" y="680" font-size="10.2" text-anchor="middle" fill="#333">08:25</text><path d="M698.4 666 V670" stroke="#555" stroke-width="1.2"/><text x="698.4" y="680" font-size="10.2" text-anchor="middle" fill="#333">08:30</text><path d="M752.8 666 V670" stroke="#555" stroke-width="1.2"/><text x="752.8" y="680" font-size="10.2" text-anchor="middle" fill="#333">08:35</text><path d="M807.2 666 V670" stroke="#555" stroke-width="1.2"/><text x="807.2" y="680" font-size="10.2" text-anchor="middle" fill="#333">08:40</text><path d="M861.6 666 V670" stroke="#555" stroke-width="1.2"/><text x="861.6" y="680" font-size="10.2" text-anchor="middle" fill="#333">08:45</text><path d="M916.0 666 V670" stroke="#555" stroke-width="1.2"/><text x="916.0" y="680" font-size="10.2" text-anchor="middle" fill="#333">08:50</text><path d="M970.4 666 V670" stroke="#555" stroke-width="1.2"/><text x="970.4" y="680" font-size="10.2" text-anchor="middle" fill="#333">08:55</text><path d="M1024.8 666 V670" stroke="#555" stroke-width="1.2"/><text x="1024.8" y="680" font-size="10.2" text-anchor="middle" fill="#333">09 AM</text><path d="M1079.2 666 V670" stroke="#555" stroke-width="1.2"/><text x="1079.2" y="680" font-size="10.2" text-anchor="middle" fill="#333">09:05</text><path d="M1133.6 666 V670" stroke="#555" stroke-width="1.2"/><text x="1133.6" y="680" font-size="10.2" text-anchor="middle" fill="#333">09:10</text><path d="M1188.0 666 V670" stroke="#555" stroke-width="1.2"/><text x="1188.0" y="680" font-size="10.2" text-anchor="middle" fill="#333">09:15</text><path d="M1242.4 666 V670" stroke="#555" stroke-width="1.2"/><text x="1242.4" y="680" font-size="10.2" text-anchor="middle" fill="#333">09:20</text><path d="M1296.8 666 V670" stroke="#555" stroke-width="1.2"/><text x="1296.8" y="680" font-size="10.2" text-anchor="middle" fill="#333">09:25</text></svg>
<div class="abs" style="left:466px;top:690px;width:31px;height:32px;background:#fff;border:1px solid #e3e3e3;border-radius:4px"></div>
<svg class="abs" style="left:476px;top:700px" width="10" height="12" viewBox="0 0 10 12"><path d="M7 3.5 V10.5 L3 7 Z" fill="#444"/></svg>
<div class="abs" style="left:502px;top:690px;width:32px;height:32px;background:#fff;border:1px solid #e3e3e3;border-radius:4px"></div>
<svg class="abs" style="left:510px;top:696px" width="17" height="17" viewBox="0 0 17 17"><g fill="none" stroke="#777" stroke-width="1.1"><rect x="1.5" y="3" width="13.5" height="13" rx="0.6"/><path d="M1.5 6.3 H15"/></g><circle cx="4.8" cy="2.6" r="1.1" fill="#777"/><circle cx="11.5" cy="2.6" r="1.1" fill="#777"/><rect x="9" y="10" width="3.8" height="3.8" fill="#777"/></svg>
<div class="abs" style="left:539px;top:690px;width:32px;height:32px;background:#fff;border:1px solid #d3dbe4;border-radius:4px"></div>
<svg class="abs" style="left:546px;top:697px" width="18" height="18" viewBox="0 0 18 18"><g fill="none" stroke="#777" stroke-width="1.1"><circle cx="8.8" cy="8.9" r="6.9"/><path d="M8.7 3.3 V9.2 H13.2"/></g></svg>
<div class="abs" style="left:803px;top:690px;width:32px;height:32px;background:#fff;border:1px solid #e3e3e3;border-radius:4px"></div>
<svg class="abs" style="left:810px;top:697px" width="18" height="18" viewBox="0 0 18 18"><g fill="none" stroke="#777" stroke-width="1.1"><path d="M1.5 1.5 V16.5 H17"/><path d="M2 13 Q5 6 9 5.5 Q13 5 15.5 3"/><path d="M2 16 Q5 11 9 10.5 Q12 10 15.5 8.8" stroke-dasharray="2 1"/><path d="M5 12.5 H16"/></g></svg>
<div class="abs" style="left:839px;top:690px;width:109px;height:32px;background:#fff;border:1px solid #e3e3e3;border-radius:4px"></div>
<div class="abs" style="left:916px;top:690px;width:1px;height:32px;background:#e3e3e3"></div>
<div class="t" style="left:852.4px;top:699.13px;font-size:14.91px;font-weight:400;color:#2b2b2b;transform:scaleX(0.9390);transform-origin:0 0;">± 1 hour</div>
<svg class="abs" style="left:923px;top:697px" width="18" height="18" viewBox="0 0 18 18"><g fill="none" stroke="#444" stroke-width="1.4"><rect x="4" y="8.5" width="10" height="8" rx="1"/><path d="M6 8.5 V6 Q6 2.8 9 2.8 Q12 2.8 12 6"/></g><circle cx="9" cy="12.5" r="1.2" fill="#444"/></svg>
<div class="abs" style="left:952px;top:690px;width:32px;height:32px;background:#fff;border:1px solid #e3e3e3;border-radius:4px"></div>
<svg class="abs" style="left:959px;top:697px" width="18" height="18" viewBox="0 0 18 18"><g fill="none" stroke="#444" stroke-width="1.5"><path d="M3.3 9 A6.3 6.3 0 1 0 5.2 4.5"/><path d="M9.5 5.5 V9.5 L12.3 11.3"/></g><path d="M0.8 7.6 L3.3 10.6 L5.8 7.6 Z" fill="#444"/></svg>
<div class="abs" style="left:1222px;top:690px;width:32px;height:32px;background:#fff;border:1px solid #e3e3e3;border-radius:4px"></div>
<svg class="abs" style="left:1230px;top:696px" width="17" height="17" viewBox="0 0 17 17"><g fill="none" stroke="#777" stroke-width="1.1"><rect x="1.5" y="3" width="13.5" height="13" rx="0.6"/><path d="M1.5 6.3 H15"/></g><circle cx="4.8" cy="2.6" r="1.1" fill="#777"/><circle cx="11.5" cy="2.6" r="1.1" fill="#777"/><rect x="9" y="10" width="3.8" height="3.8" fill="#777"/></svg>
<div class="abs" style="left:1258px;top:690px;width:33px;height:32px;background:#fff;border:1px solid #d3dbe4;border-radius:4px"></div>
<svg class="abs" style="left:1265.5px;top:697px" width="18" height="18" viewBox="0 0 18 18"><g fill="none" stroke="#777" stroke-width="1.1"><circle cx="8.8" cy="8.9" r="6.9"/><path d="M8.7 3.3 V9.2 H13.2"/></g></svg>
<div class="abs" style="left:1290px;top:690px;width:32px;height:32px;background:#fff;border:1px solid #e3e3e3;border-radius:4px"></div>
<svg class="abs" style="left:1301px;top:700px" width="10" height="12" viewBox="0 0 10 12"><path d="M3 3.5 V10.5 L7 7 Z" fill="#444"/></svg>
<div class="abs" style="left:465px;top:729px;width:857px;height:2px;background:#ebebeb"></div>
<div class="abs" style="left:465px;top:759px;width:857px;height:2px;background:#efefef"></div>
<div class="abs" style="left:465px;top:729px;width:1px;height:32px;background:#efefef"></div>
<div class="abs" style="left:1321px;top:729px;width:1px;height:32px;background:#efefef"></div>
<svg class="abs" style="left:0px;top:0px" width="1380" height="900" viewBox="0 0 1380 900"><polyline points="466.0,732.5 467.2,758.0 468.1,731.6 469.3,757.1 470.5,734.8 471.9,756.9 473.5,733.6 475.0,756.7 476.3,750.1 477.6,758.3 479.1,735.2 480.6,757.6 482.2,731.9 483.3,758.9 484.7,732.7 485.9,757.4 487.3,735.1 488.9,758.6 490.4,732.2 492.0,758.8 493.5,732.3 494.9,750.0 496.6,731.9 497.8,756.9 499.3,746.6 500.2,758.3 501.8,735.4 503.5,746.4 504.5,732.3 505.9,750.1 507.0,735.3 508.2,757.7 509.6,733.9 511.0,758.9 512.3,734.4 513.4,758.9 514.8,731.5 516.1,756.6 517.5,731.7 518.8,758.2 520.3,738.8 521.7,758.9 523.0,733.9 524.2,757.3 525.5,732.7 527.1,756.6 528.5,732.7 530.1,757.1 531.3,734.3 532.5,757.3 533.7,734.9 534.9,758.1 536.2,732.4 537.5,757.0 539.1,732.2 540.6,758.1 541.8,732.0 543.3,757.2 544.6,733.2 546.2,751.2 547.8,735.4 549.5,758.8 551.0,734.8 552.3,757.2 553.3,731.8 554.5,750.7 555.9,735.2 557.6,748.4 558.6,732.7 559.9,757.5 561.3,732.9 562.9,757.7 564.1,732.3 565.6,756.9 567.3,734.7 568.2,758.1 569.1,732.6 570.4,757.6 572.0,739.8 572.9,756.7 574.5,731.8 575.7,757.3 577.1,733.8 578.2,757.3 579.5,734.4 580.5,756.9 581.8,734.6 583.4,758.1 584.6,733.5 585.8,758.2 586.9,733.6 587.9,757.6 589.5,735.2 591.1,758.5 592.4,732.0 593.8,758.7 595.2,734.4 596.2,740.0 597.7,739.4 599.3,749.8 600.3,734.9 601.9,758.9 603.4,731.6 604.8,758.3 606.3,742.5 607.6,758.6 608.6,732.5 610.2,757.5 611.4,732.9 612.3,757.8 613.6,734.5 615.0,758.4 616.3,733.4 618.0,748.5 619.6,733.6 621.1,757.0 622.1,733.8 623.2,758.2 624.3,734.3 625.9,758.0 627.0,731.6 628.2,756.9 629.4,734.6 631.1,757.7 632.3,734.8 633.7,757.7 635.3,733.1 636.9,757.7 638.0,734.4 639.7,758.6 640.7,732.5 642.2,758.6 643.3,735.0 644.5,739.3 646.1,732.7 647.5,742.7 648.7,733.4 650.1,758.9 651.4,732.0 652.9,756.8 654.5,731.9 655.7,758.4 656.8,734.2 658.4,757.2 660.0,734.2 661.0,757.7 662.5,734.2 663.5,758.1 664.6,735.1 665.6,758.8 666.8,734.4 668.1,758.1 669.2,748.0 670.7,757.9 671.9,732.6 673.5,756.6 674.6,734.6 675.8,757.5 677.3,732.9 678.3,739.6 679.8,734.4 680.9,757.5 682.4,734.5 683.4,757.5 684.8,733.8 685.9,749.2 687.5,735.3 688.8,758.0 690.5,734.2 692.1,757.7 693.6,731.5 695.0,757.7 696.3,732.3 697.2,757.8 698.5,733.8 700.1,756.8 701.5,731.7 702.6,756.7 704.2,732.8 705.7,756.8 707.0,735.2 708.5,757.4 710.2,734.9 711.7,757.7 712.6,731.8 713.6,757.7 715.0,733.2 716.1,757.7 717.3,732.2 718.8,757.4 720.1,733.9 721.0,757.0 722.1,733.3 723.1,756.9 724.2,731.6 725.2,738.3 726.5,733.1 727.4,757.5 728.3,735.4 729.3,757.7 730.7,732.9 731.6,758.3 733.2,733.4 734.3,757.1 735.9,734.0 736.8,758.2 738.2,739.3 739.2,747.2 740.9,732.3 742.1,758.5 743.8,731.6 745.2,742.1 746.8,732.0 747.9,758.2 749.0,734.5 750.5,757.9 751.7,733.2 753.2,757.7 754.3,734.4 755.7,757.5 756.8,744.5 758.3,741.3 759.9,734.1 761.5,757.6 762.9,732.8 763.9,757.5 764.9,733.8 765.8,758.1 766.8,732.1 768.2,756.5 769.8,732.4 771.1,758.5 772.6,733.6 773.6,756.7 774.6,731.6 775.7,744.5 776.8,734.8 778.2,758.4 779.4,733.9 780.3,758.6 781.9,732.3 783.2,742.8 784.5,731.8 785.9,757.6 787.3,732.4 789.0,757.3 790.0,732.4 791.6,758.3 793.3,733.9 794.7,757.5 796.3,735.3 797.8,757.5 799.4,732.7 800.5,756.7 801.6,733.6 802.5,758.4 803.8,732.9 805.3,757.2 806.4,740.1 807.9,758.3 809.6,735.0 810.7,757.3 812.0,733.7 813.6,757.2 815.2,734.7 816.3,739.8 817.6,733.6 818.5,757.0 819.8,735.4 821.5,756.6 822.4,733.2 823.3,742.4 824.4,734.7 825.5,756.6 826.9,734.2 828.5,757.1 830.0,734.7 831.6,757.9 832.6,731.6 834.2,758.8 835.6,735.2 837.0,757.5 838.1,732.2 839.8,757.9 840.9,733.3 842.2,758.9 843.3,733.6 844.9,758.6 846.3,731.6 847.7,757.7 849.1,735.1 850.6,757.4 852.2,735.3 853.2,758.8 854.4,734.8 855.6,758.9 856.7,733.1 857.7,757.1 858.7,732.4 859.6,757.8 861.2,734.0 862.1,757.2 863.1,732.6 864.2,741.3 865.9,732.1 866.9,759.0 868.3,748.6 869.4,757.0 871.0,731.7 872.3,757.5 873.5,735.5 874.5,756.9 875.7,740.7 877.3,759.0 878.4,732.9 879.7,758.3 880.6,732.9 882.2,757.9 883.5,733.3 885.1,757.0 886.7,734.9 888.4,758.6 889.5,751.7 890.7,758.7 891.6,735.0 893.3,758.2 894.8,731.9 896.1,756.9 897.2,733.5 898.4,757.4 900.1,735.2 901.7,757.2 902.8,732.0 904.3,757.4 905.4,735.4 906.7,757.8 908.3,733.6 909.7,756.7 911.3,750.0 912.5,759.0 913.6,733.7 914.8,758.7 916.0,732.7 917.3,757.4 918.9,733.8 919.9,757.4 920.9,731.8 922.1,756.6 923.7,733.6 925.3,758.6 926.5,734.2 928.1,757.4 929.7,732.6 931.3,738.4 932.5,731.5 933.5,757.2 934.8,733.2 936.3,751.7 937.7,731.8 939.2,738.1 940.5,733.2 942.1,757.3 943.4,735.0 944.6,756.7 945.6,735.2 946.9,756.7 948.2,734.9 949.3,759.0 950.6,732.3 952.3,756.8 953.7,732.9 955.3,758.6 956.4,731.7 957.5,757.0 958.6,734.8 959.6,758.8 960.6,745.0 961.9,758.6 962.8,733.1 963.8,757.1 965.3,732.9 966.4,757.6 967.5,734.3 968.9,758.0 970.4,733.1 971.8,758.1 972.7,734.6 974.0,757.9 975.6,734.2 977.2,759.0 978.9,733.4 980.4,757.3 981.7,731.9 983.3,757.7 984.9,733.3 986.3,758.6 987.2,734.5 988.4,758.7 989.7,735.5 991.2,747.5 992.7,732.9 994.1,757.1 995.4,733.0 996.7,757.3 997.8,733.1 999.0,757.9 1000.0,733.4 1001.3,756.9 1002.6,735.2 1003.9,741.9 1005.1,735.3 1006.7,757.7 1007.8,735.4 1009.2,757.8 1010.3,735.4 1011.7,747.8 1013.2,732.4 1014.9,757.3 1016.0,734.2 1017.3,757.4 1018.8,733.5 1020.0,758.5 1021.3,733.8 1022.3,756.9 1023.3,734.5 1025.0,758.6 1026.2,731.7 1027.7,758.8 1028.7,735.4 1030.0,758.3 1031.4,734.2 1032.4,756.8 1034.0,739.2 1035.5,757.5 1037.2,733.9 1038.7,756.5 1040.1,745.3 1041.3,758.9 1042.8,733.1 1044.1,758.2 1045.2,733.3 1046.3,757.1 1047.3,732.8 1048.7,758.0 1049.6,731.6 1050.6,757.9 1052.1,733.9 1053.6,757.8 1054.8,731.8 1056.1,756.7 1057.4,734.0 1058.4,759.0 1059.6,735.5 1060.9,757.7 1062.6,744.6 1063.5,758.3 1065.1,731.7 1066.3,757.7 1067.4,732.0 1068.4,751.5 1069.4,731.8 1070.7,758.4 1072.1,731.8 1073.5,739.0 1074.9,735.2 1076.4,757.9 1077.6,742.3 1079.1,757.1 1080.2,732.9 1081.7,758.9 1082.8,741.4 1084.2,758.0 1085.2,731.9 1086.5,757.1 1087.9,732.9 1088.8,758.3 1090.0,734.4 1091.1,757.1 1092.4,734.1 1093.4,758.4 1094.6,733.5 1095.7,757.5 1097.2,735.2 1098.8,758.5 1100.5,732.1 1102.1,756.8 1103.7,732.7 1105.4,757.6 1106.4,734.8 1107.6,757.6 1108.7,731.6 1109.8,757.5 1111.0,731.8 1112.1,757.1 1113.1,735.1 1114.3,757.0 1115.6,733.1 1116.8,758.6 1118.3,741.5 1119.3,756.9 1121.0,735.2 1122.0,750.7 1123.1,732.7 1124.1,758.8 1125.6,731.9 1126.8,757.4 1128.2,732.5 1129.5,756.6 1130.7,732.2 1131.7,757.3 1132.9,732.8 1134.2,758.4 1135.7,733.4 1136.7,758.6 1138.0,733.6 1139.2,757.4 1140.1,733.7 1141.4,757.6 1142.8,732.2 1143.8,758.7 1145.4,745.6 1146.9,758.6 1148.6,731.7 1149.6,758.4 1151.1,734.7 1152.5,758.7 1153.5,739.2 1155.1,757.2 1156.0,732.3 1156.9,757.8 1158.0,734.3 1159.4,758.4 1160.3,732.3 1162.0,757.0 1163.0,734.9 1164.3,758.2 1165.8,734.7 1166.9,757.1 1168.5,733.3 1169.8,758.2 1171.0,734.6 1172.1,756.7 1173.6,733.9 1175.3,757.6 1176.3,732.9 1177.5,758.9 1178.7,734.1 1180.1,757.7 1181.4,734.8 1182.9,757.2 1183.9,733.4 1185.4,757.0 1186.4,733.7 1187.3,756.9 1188.9,733.3 1190.1,758.1 1191.5,731.5 1192.8,756.6 1194.0,732.7 1195.3,757.7 1196.6,745.7 1197.8,757.8 1198.7,731.7 1199.7,758.6 1200.8,734.3 1201.8,758.4 1203.5,732.1 1204.6,758.7 1205.9,732.1 1207.4,756.6 1209.0,735.2 1210.3,758.9 1211.5,732.0 1213.0,756.7 1214.2,735.0 1215.7,741.7 1216.9,733.2 1218.5,758.4 1220.0,732.9 1221.5,758.5 1222.6,734.0 1224.2,756.5 1225.5,732.3 1226.8,758.9 1228.2,735.0 1229.2,758.6 1230.9,734.5 1232.0,758.1 1233.5,733.8 1234.7,757.3 1236.1,733.0 1237.3,758.1 1238.5,735.4 1240.0,757.2 1241.5,734.8 1242.5,758.3 1243.7,733.9 1245.1,758.4 1246.1,733.8 1247.6,757.9 1248.5,734.7 1249.9,757.3 1250.9,733.6 1252.5,758.5 1254.0,733.0 1255.0,758.6 1256.5,731.8 1257.5,757.9 1258.4,733.2 1259.8,757.3 1261.0,735.1 1261.9,741.5 1263.5,732.0 1265.0,758.0 1266.6,734.8 1268.0,757.3 1269.6,740.7 1270.7,758.5 1271.8,734.6 1273.4,757.6 1275.0,732.3 1276.2,747.8 1277.6,732.7 1278.6,742.9 1280.2,733.5 1281.3,758.1 1282.9,731.7 1284.3,758.6 1285.3,732.2 1286.2,756.8 1287.8,734.9 1289.2,758.7 1290.5,739.3 1291.6,757.7 1293.3,733.8 1294.9,757.1 1296.6,732.6 1298.1,758.7 1299.3,733.9 1300.4,757.5 1301.4,751.6 1302.5,758.5 1304.1,733.4 1305.3,758.6 1306.9,751.2 1308.0,756.7 1309.0,732.6 1310.7,758.1 1312.2,734.4 1313.3,756.9 1314.4,734.5 1315.7,757.9 1316.8,732.5 1317.8,758.2 1319.0,735.3 1320.7,757.8" fill="none" stroke="#df6b9e" stroke-width="1.0"/><path d="M1101.7 731 V760" stroke="#555" stroke-width="1.6" stroke-dasharray="4 1.5"/><path d="M1307.5 728.5 V773" stroke="#222" stroke-width="1.3"/><rect x="1303.6" y="736.8" width="7.6" height="18" rx="1" fill="#222"/><rect x="1305.2" y="763" width="2" height="5.5" fill="#b5b5b5"/><rect x="1308.2" y="763" width="2" height="5.5" fill="#b5b5b5"/></svg>
<svg class="abs" style="left:0;top:0" width="1380" height="900" font-family="Liberation Sans"><path d="M465 774 H1322" stroke="#6f6f6f" stroke-width="1.8"/><path d="M465.5 774 V778 M1321.5 774 V778" stroke="#555" stroke-width="1"/><path d="M481.7 774 V778" stroke="#555" stroke-width="1.2"/><text x="481.7" y="788" font-size="10.2" text-anchor="middle" fill="#333">Sep</text><path d="M621.7 774 V778" stroke="#555" stroke-width="1.2"/><text x="621.7" y="788" font-size="10.2" text-anchor="middle" fill="#333">Oct</text><path d="M766 774 V778" stroke="#555" stroke-width="1.2"/><text x="766" y="788" font-size="10.2" text-anchor="middle" fill="#333">Nov</text><path d="M905.3 774 V778" stroke="#555" stroke-width="1.2"/><text x="905.3" y="788" font-size="10.2" text-anchor="middle" fill="#333">Dec</text><path d="M1049.3 774 V778" stroke="#555" stroke-width="1.2"/><text x="1049.3" y="788" font-size="10.2" text-anchor="middle" fill="#333">2022</text><path d="M1194 774 V778" stroke="#555" stroke-width="1.2"/><text x="1194" y="788" font-size="10.2" text-anchor="middle" fill="#333">Feb</text></svg>
<div class="abs" style="left:466px;top:798px;width:244px;height:24px;background:#fff;border:1px solid #dedede;border-radius:3px"></div>
<div class="t" style="left:466px;top:803.96px;font-size:12.99px;font-weight:400;color:#2b2b2b;transform:scaleX(0.9390);transform-origin:50% 0;width:33.3px;text-align:center">1D</div>
<div class="abs" style="left:499.3px;top:798px;width:1.0px;height:24px;background:#dedede"></div>
<div class="t" style="left:499.3px;top:803.96px;font-size:12.99px;font-weight:400;color:#2b2b2b;transform:scaleX(0.9390);transform-origin:50% 0;width:36.4px;text-align:center">1W</div>
<div class="abs" style="left:535.7px;top:798px;width:1.0px;height:24px;background:#dedede"></div>
<div class="t" style="left:535.7px;top:803.96px;font-size:12.99px;font-weight:400;color:#2b2b2b;transform:scaleX(0.9390);transform-origin:50% 0;width:35.0px;text-align:center">1M</div>
<div class="abs" style="left:570.7px;top:798px;width:1.0px;height:24px;background:#dedede"></div>
<div class="t" style="left:570.7px;top:803.96px;font-size:12.99px;font-weight:400;color:#2b2b2b;transform:scaleX(0.9390);transform-origin:50% 0;width:35.0px;text-align:center">3M</div>
<div class="abs" style="left:605.7px;top:799px;width:35.0px;height:22px;background:#eef4fb"></div>
<div class="abs" style="left:605.7px;top:798px;width:1.0px;height:24px;background:#dedede"></div>
<div class="t" style="left:605.7px;top:803.96px;font-size:12.99px;font-weight:400;color:#1e6bc5;transform:scaleX(0.9390);transform-origin:50% 0;width:35.0px;text-align:center">6M</div>
<div class="abs" style="left:640.7px;top:798px;width:1.0px;height:24px;background:#dedede"></div>
<div class="t" style="left:640.7px;top:803.96px;font-size:12.99px;font-weight:400;color:#2b2b2b;transform:scaleX(0.9390);transform-origin:50% 0;width:31.6px;text-align:center">1Y</div>
<div class="abs" style="left:672.3px;top:798px;width:1.0px;height:24px;background:#dedede"></div>
<div class="t" style="left:672.3px;top:803.96px;font-size:12.99px;font-weight:400;color:#2b2b2b;transform:scaleX(0.9390);transform-origin:50% 0;width:37.7px;text-align:center">ALL</div>
<div class="abs" style="left:726px;top:798px;width:104px;height:24px;background:#fff;border:1px solid #dedede;border-radius:3px"></div>
<div class="abs" style="left:806px;top:798px;width:1px;height:24px;background:#dedede"></div>
<div class="t" style="left:735px;top:803.96px;font-size:12.99px;font-weight:400;color:#2b2b2b;transform:scaleX(0.9390);transform-origin:0 0;letter-spacing:-0.35px">CUSTOM</div>
<svg class="abs" style="left:790px;top:806px" width="9" height="6" viewBox="0 0 9 6"><path d="M0.5 5.5 L8.5 5.5 L4.5 1 Z" fill="#999"/></svg>
<svg class="abs" style="left:812px;top:804px" width="12" height="12" viewBox="0 0 12 12"><g fill="none" stroke="#777" stroke-width="1.1"><rect x="0.8" y="1.5" width="10.4" height="9"/></g><path d="M3 4 L5 6 L3 8 M9 4 L7 6 L9 8" fill="none" stroke="#777" stroke-width="1"/></svg>
<svg class="abs" style="left:0;top:0" width="1380" height="900"><path d="M54.90 368.00 L102.60 368.00" stroke="#6f00ff" stroke-width="2.2" stroke-dasharray="12.159 3.741" stroke-dashoffset="6.079" fill="none"/><path d="M101.50 366.90 L101.50 412.60" stroke="#6f00ff" stroke-width="2.2" stroke-dasharray="11.649 3.584" stroke-dashoffset="5.825" fill="none"/><path d="M102.60 411.50 L54.90 411.50" stroke="#6f00ff" stroke-width="2.2" stroke-dasharray="12.159 3.741" stroke-dashoffset="6.079" fill="none"/><path d="M56.00 412.60 L56.00 366.90" stroke="#6f00ff" stroke-width="2.2" stroke-dasharray="11.649 3.584" stroke-dashoffset="5.825" fill="none"/><path d="M100.90 252.00 L438.10 252.00" stroke="#6f00ff" stroke-width="2.2" stroke-dasharray="11.894 4.163" stroke-dashoffset="5.947" fill="none"/><path d="M437.00 250.90 L437.00 565.10" stroke="#6f00ff" stroke-width="2.2" stroke-dasharray="12.250 4.287" stroke-dashoffset="6.125" fill="none"/><path d="M438.10 564.00 L100.90 564.00" stroke="#6f00ff" stroke-width="2.2" stroke-dasharray="11.894 4.163" stroke-dashoffset="5.947" fill="none"/><path d="M102.00 565.10 L102.00 250.90" stroke="#6f00ff" stroke-width="2.2" stroke-dasharray="12.250 4.287" stroke-dashoffset="6.125" fill="none"/><path d="M465 426 L319 377.5" stroke="#6f00ff" stroke-width="2" fill="none"/><path d="M328 373.3 L318.5 377.3 L323.3 386" stroke="#6f00ff" stroke-width="2" fill="none" stroke-linejoin="miter"/><path d="M694.4 285.5 L749.3 430" stroke="#6f00ff" stroke-width="2" fill="none"/><path d="M740.4 426.2 L749.3 430 L753.3 421" stroke="#6f00ff" stroke-width="2" fill="none"/><rect x="331" y="227" width="180" height="32" rx="6" fill="#6f00ff"/><rect x="618.3" y="255.4" width="254" height="30" rx="5" fill="#fff" stroke="#6f00ff" stroke-width="2"/><rect x="466.5" y="411.5" width="144" height="29" rx="5" fill="#fff" stroke="#6f00ff" stroke-width="2"/></svg>
<div class="t" style="left:356px;top:236.19px;font-size:16.71px;font-weight:700;color:#fff;transform:scaleX(0.8850);transform-origin:0 0;">Fingerprint details</div>
<div class="t" style="left:648.9px;top:262.80px;font-size:16.59px;font-weight:700;color:#6f00ff;transform:scaleX(0.8850);transform-origin:0 0;">Fingerprint details opened?</div>
<div class="t" style="left:493px;top:418.75px;font-size:16.64px;font-weight:700;color:#6f00ff;transform:scaleX(0.8850);transform-origin:0 0;">Shift options</div>
<div class="t" style="left:755.6px;top:388.90px;font-size:16.83px;font-weight:700;color:#6f00ff;transform:scaleX(0.8850);transform-origin:0 0;">Drag the hull</div>
</body></html>
